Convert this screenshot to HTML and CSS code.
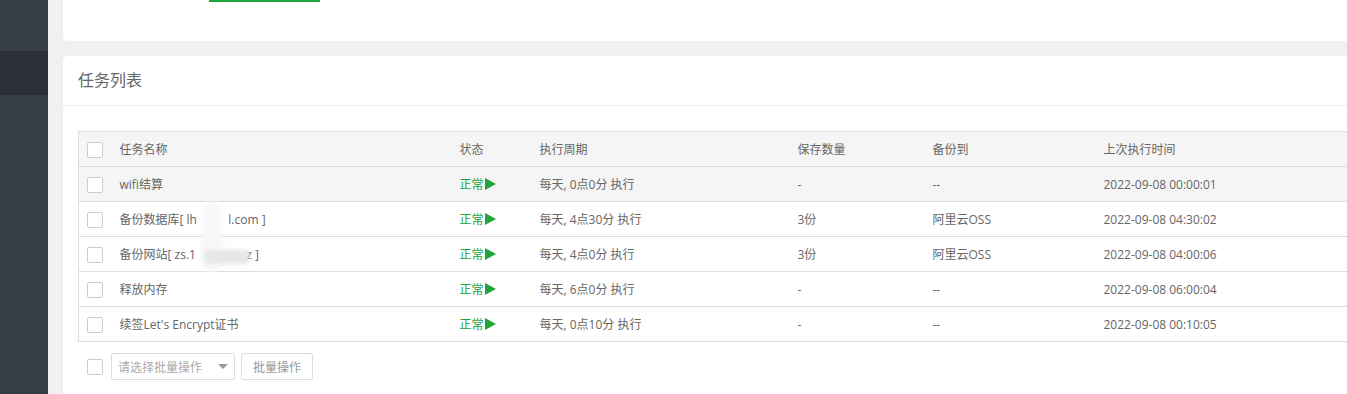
FILE: index.html
```html
<!DOCTYPE html>
<html>
<head>
    <meta charset="utf-8">
    <link rel="stylesheet" href="styles.css">
</head>
<body>
    <div class="layout">
        <div class="sidebar">
            <div class="side-item"></div>
            <div class="side-item active"></div>
        </div>
        <div class="main">
            <div class="card top-card">
                <div class="tab-line"></div>
            </div>

            <div class="card">
                <div class="card-title">任务列表</div>
                <div class="card-body">
                    <table class="task-table">
                        <colgroup>
                            <col style="width: 31px">
                            <col style="width: 340px">
                            <col style="width: 80px">
                            <col style="width: 258px">
                            <col style="width: 135px">
                            <col style="width: 171px">
                            <col>
                        </colgroup>
                        <thead>
                            <tr>
                                <th class="chk"><span class="checkbox"></span></th>
                                <th>任务名称</th>
                                <th>状态</th>
                                <th>执行周期</th>
                                <th>保存数量</th>
                                <th>备份到</th>
                                <th>上次执行时间</th>
                            </tr>
                        </thead>
                        <tbody>
                            <tr class="hover">
                                <td class="chk"><span class="checkbox"></span></td>
                                <td>wifi结算</td>
                                <td><span class="status">正常<svg width="11" height="12" viewBox="0 0 11 12"><path d="M0 0 L11 6 L0 12 Z" fill="#20a53a"/></svg></span></td>
                                <td>每天, 0点0分 执行</td>
                                <td>-</td>
                                <td>--</td>
                                <td>2022-09-08 00:00:01</td>
                            </tr>
                            <tr>
                                <td class="chk"><span class="checkbox"></span></td>
                                <td class="masked">备份数据库[ lh<span class="hide">xxxxx</span>l.com ]<span class="smudge tall"></span></td>
                                <td><span class="status">正常<svg width="11" height="12" viewBox="0 0 11 12"><path d="M0 0 L11 6 L0 12 Z" fill="#20a53a"/></svg></span></td>
                                <td>每天, 4点30分 执行</td>
                                <td>3份</td>
                                <td>阿里云OSS</td>
                                <td>2022-09-08 04:30:02</td>
                            </tr>
                            <tr>
                                <td class="chk"><span class="checkbox"></span></td>
                                <td class="masked">备份网站[ zs.1<span class="hide">xxxxxxxx</span>z ]<span class="smudge wide"></span></td>
                                <td><span class="status">正常<svg width="11" height="12" viewBox="0 0 11 12"><path d="M0 0 L11 6 L0 12 Z" fill="#20a53a"/></svg></span></td>
                                <td>每天, 4点0分 执行</td>
                                <td>3份</td>
                                <td>阿里云OSS</td>
                                <td>2022-09-08 04:00:06</td>
                            </tr>
                            <tr>
                                <td class="chk"><span class="checkbox"></span></td>
                                <td>释放内存</td>
                                <td><span class="status">正常<svg width="11" height="12" viewBox="0 0 11 12"><path d="M0 0 L11 6 L0 12 Z" fill="#20a53a"/></svg></span></td>
                                <td>每天, 6点0分 执行</td>
                                <td>-</td>
                                <td>--</td>
                                <td>2022-09-08 06:00:04</td>
                            </tr>
                            <tr>
                                <td class="chk"><span class="checkbox"></span></td>
                                <td>续签Let's Encrypt证书</td>
                                <td><span class="status">正常<svg width="11" height="12" viewBox="0 0 11 12"><path d="M0 0 L11 6 L0 12 Z" fill="#20a53a"/></svg></span></td>
                                <td>每天, 0点10分 执行</td>
                                <td>-</td>
                                <td>--</td>
                                <td>2022-09-08 00:10:05</td>
                            </tr>
                        </tbody>
                    </table>

                    <div class="batch">
                        <span class="checkbox"></span>
                        <div class="select">
                            <span>请选择批量操作</span>
                            <span class="caret"></span>
                        </div>
                        <button class="btn">批量操作</button>
                    </div>
                </div>
            </div>
        </div>
    </div>
</body>
</html>
```

FILE: styles.css
```css
html, body {
    margin: 0;
    height: 100%;
    overflow: hidden;
}

body {
    background-color: #f0f0f0;
    font-family: "Open Sans", "Noto Sans CJK SC", sans-serif;
    font-size: 12px;
    color: #666;
}

.layout {
    display: flex;
    height: 100%;
}

.sidebar {
    width: 48px;
    flex-shrink: 0;
    background-color: #363d44;
}

.side-item {
    height: 51px;
}

.side-item.active {
    height: 44px;
    background-color: #2b3038;
}

.main {
    flex: 1;
    padding-left: 15px;
    margin-right: -20px;
    display: flex;
    flex-direction: column;
    gap: 15px;
}

.card {
    background-color: #fff;
    border-radius: 5px;
    flex-shrink: 0;
}

.top-card {
    height: 41px;
    border-radius: 0 0 5px 5px;
}

.tab-line {
    margin-left: 146px;
    width: 111px;
    height: 2px;
    background-color: #20a53a;
}

.card-title {
    height: 49px;
    line-height: 49px;
    padding-left: 15px;
    font-size: 16px;
    color: #666;
    border-bottom: 1px solid #eee;
}

.card-body {
    padding: 25px 0 30px 15px;
}

.task-table {
    width: 1290px;
    border-collapse: collapse;
    table-layout: fixed;
    border: 1px solid #ddd;
}

.task-table th,
.task-table td {
    height: 34px;
    padding: 0 0 0 10px;
    text-align: left;
    font-weight: normal;
    border-bottom: 1px solid #ddd;
    white-space: nowrap;
}

.task-table thead tr,
.task-table tr.hover {
    background-color: #f5f5f5;
}

.task-table .chk {
    padding-left: 8px;
}

.checkbox {
    display: inline-block;
    width: 14px;
    height: 14px;
    border: 1px solid #ccc;
    border-radius: 2px;
    background: #fff;
    vertical-align: middle;
}

.status {
    color: #20a53a;
    display: inline-flex;
    align-items: center;
}

.status svg {
    margin-left: 1px;
}

.masked {
    position: relative;
}

.hide {
    color: transparent;
}

.smudge {
    position: absolute;
    background: #ececec;
    filter: blur(2px);
}

.smudge.tall {
    left: 91px;
    top: 0;
    width: 22px;
    height: 70px;
    background: rgba(248, 248, 248, 0.95);
    border-radius: 10px;
}

.smudge.wide {
    left: 95px;
    top: 13px;
    width: 44px;
    height: 14px;
    background: #e6e6e6;
}

.batch {
    display: flex;
    align-items: center;
    margin-top: 11px;
    padding-left: 9px;
    gap: 8px;
}

.select {
    height: 25px;
    border: 1px solid #ddd;
    border-radius: 2px;
    display: flex;
    align-items: center;
    justify-content: space-between;
    padding: 0 6px;
    width: 110px;
    color: #aaa;
}

.caret {
    width: 0;
    height: 0;
    border-left: 5px solid transparent;
    border-right: 5px solid transparent;
    border-top: 5px solid #999;
}

.btn {
    height: 27px;
    padding: 0 11px;
    border: 1px solid #ddd;
    border-radius: 2px;
    background: #fff;
    color: #999;
    font-family: inherit;
    font-size: 12px;
    margin-left: -2px;
}
```
